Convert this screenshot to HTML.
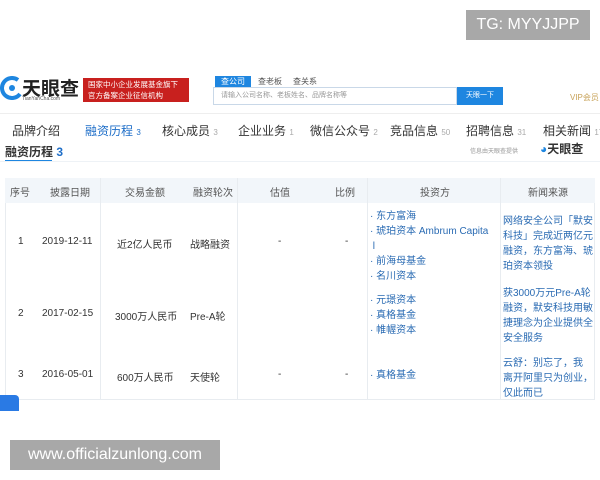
<!DOCTYPE html><html><head><meta charset="utf-8"><style>
body{margin:0;width:600px;height:480px;background:#fff;position:relative;overflow:hidden;font-family:"Liberation Sans","Noto Sans CJK SC",sans-serif;color:#333}
.a{position:absolute;white-space:nowrap}
.wm{position:absolute;background:#a8a8a8;color:#fff;font-size:16px;display:flex;align-items:center;justify-content:center}
.nav{font-size:12px;top:122px;color:#333}
.nav small{color:#aaa;font-size:8px}
.th{top:184px;font-size:10px;color:#555}
.td{font-size:10px;color:#333}
.bl{color:#2a6bb3;font-size:10px;line-height:15px}
.vl{position:absolute;width:1px;background:#e8ecf0;top:178px;height:222px}
</style></head><body>
<div class="wm" style="left:466px;top:10px;width:124px;height:30px">TG: MYYJJPP</div>
<svg class="a" style="left:0;top:76px" width="22" height="24"><path d="M18 4 A10 10 0 1 0 20 18" stroke="#1e86e0" stroke-width="4" fill="none"/><circle cx="12" cy="12" r="3" fill="#1e86e0"/></svg>
<div class="a" style="left:22px;top:74px;font-size:19px;color:#222;font-weight:bold">天眼查</div>
<div class="a" style="left:22px;top:96px;font-size:5px;color:#555">TianYanCha.com</div>
<div class="a" style="left:83px;top:78px;width:106px;height:24px;background:#c8201e;color:#fff;font-size:7.5px;line-height:11px;padding:1px 5px;box-sizing:border-box">国家中小企业发展基金旗下<br>官方备案企业征信机构</div>
<div class="a" style="left:215px;top:76px;width:36px;height:11px;background:#1e86e0;color:#fff;font-size:8px;text-align:center;line-height:11px">查公司</div>
<div class="a" style="left:258px;top:76px;font-size:8px;color:#555">查老板</div>
<div class="a" style="left:293px;top:76px;font-size:8px;color:#555">查关系</div>
<div class="a" style="left:213px;top:87px;width:244px;height:18px;border:1px solid #c9d8e8;box-sizing:border-box;font-size:7px;color:#999;line-height:16px;padding-left:7px">请输入公司名称、老板姓名、品牌名称等</div>
<div class="a" style="left:457px;top:87px;width:46px;height:18px;background:#1e86e0;color:#fff;font-size:7px;text-align:center;line-height:18px">天眼一下</div>
<div class="a" style="left:570px;top:92px;font-size:8px;color:#c8a35a">VIP会员</div>
<div class="a" style="left:0;top:113px;width:600px;height:1px;background:#eee"></div>
<div class="a nav" style="left:12px">品牌介绍</div>
<div class="a nav" style="left:85px;color:#1e6ec8">融资历程 <small style="color:#1e6ec8">3</small></div>
<div class="a nav" style="left:162px">核心成员 <small>3</small></div>
<div class="a nav" style="left:238px">企业业务 <small>1</small></div>
<div class="a nav" style="left:310px">微信公众号 <small>2</small></div>
<div class="a nav" style="left:390px">竞品信息 <small>50</small></div>
<div class="a nav" style="left:466px">招聘信息 <small>31</small></div>
<div class="a nav" style="left:543px">相关新闻 <small>17</small></div>
<div class="a" style="left:5px;top:143px;font-size:12px;font-weight:bold;color:#333">融资历程 <span style="color:#1e6ec8">3</span></div>
<div class="a" style="left:5px;top:160px;width:47px;height:2px;background:#1e86e0"></div>
<div class="a" style="left:0;top:161px;width:600px;height:1px;background:#eef2f6"></div>
<div class="a" style="left:470px;top:146px;font-size:6px;color:#999">信息由天眼查提供</div>
<div class="a" style="left:540px;top:140px;font-size:12px;font-weight:bold;color:#333"><span style="color:#1e86e0">◕</span>天眼查</div>
<div class="a" style="left:5px;top:178px;width:590px;height:222px;border:1px solid #e8ecf0;box-sizing:border-box"></div>
<div class="a" style="left:5px;top:178px;width:590px;height:25px;background:#f2f6fa"></div>
<div class="vl" style="left:100px"></div><div class="vl" style="left:237px"></div><div class="vl" style="left:367px"></div><div class="vl" style="left:500px"></div>
<div class="a th" style="left:10px">序号</div><div class="a th" style="left:50px">披露日期</div><div class="a th" style="left:125px">交易金额</div><div class="a th" style="left:193px">融资轮次</div><div class="a th" style="left:270px">估值</div><div class="a th" style="left:335px">比例</div><div class="a th" style="left:420px">投资方</div><div class="a th" style="left:528px">新闻来源</div>
<div class="a td" style="left:18px;top:236px">1</div><div class="a td" style="left:42px;top:236px">2019-12-11</div><div class="a td" style="left:117px;top:236px">近2亿人民币</div><div class="a td" style="left:190px;top:236px">战略融资</div><div class="a td" style="left:278px;top:236px">-</div><div class="a td" style="left:345px;top:236px">-</div>
<div class="a bl" style="left:370px;top:209px">· 东方富海<br>· 琥珀资本 Ambrum Capita<br>&nbsp;l<br>· 前海母基金<br>· 名川资本</div>
<div class="a bl" style="left:503px;top:214px">网络安全公司「默安<br>科技」完成近两亿元<br>融资，东方富海、琥<br>珀资本领投</div>
<div class="a td" style="left:18px;top:308px">2</div><div class="a td" style="left:42px;top:308px">2017-02-15</div><div class="a td" style="left:115px;top:308px">3000万人民币</div><div class="a td" style="left:190px;top:308px">Pre-A轮</div>
<div class="a bl" style="left:370px;top:293px">· 元璟资本<br>· 真格基金<br>· 帷幄资本</div>
<div class="a bl" style="left:503px;top:286px">获3000万元Pre-A轮<br>融资，默安科技用敏<br>捷理念为企业提供全<br>安全服务</div>
<div class="a td" style="left:18px;top:369px">3</div><div class="a td" style="left:42px;top:369px">2016-05-01</div><div class="a td" style="left:117px;top:369px">600万人民币</div><div class="a td" style="left:190px;top:369px">天使轮</div><div class="a td" style="left:278px;top:369px">-</div><div class="a td" style="left:345px;top:369px">-</div>
<div class="a bl" style="left:370px;top:368px">· 真格基金</div>
<div class="a bl" style="left:503px;top:356px">云舒：别忘了，我<br>离开阿里只为创业，<br>仅此而已</div>
<div class="a" style="left:0;top:395px;width:19px;height:16px;background:#2a7ae4;border-radius:0 4px 0 0"></div>
<div class="wm" style="left:10px;top:440px;width:210px;height:30px">www.officialzunlong.com</div>
</body></html>
